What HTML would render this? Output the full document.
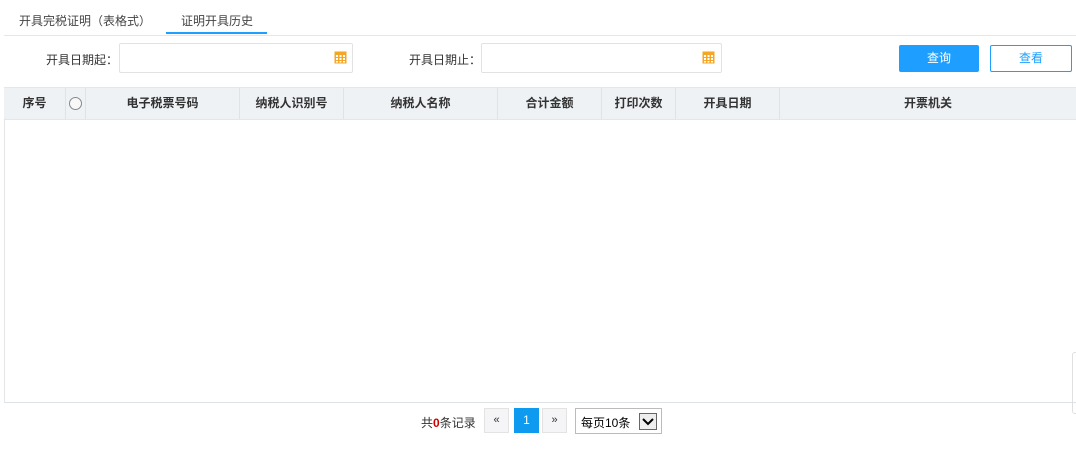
<!DOCTYPE html>
<html><head><meta charset="utf-8"><style>
body{margin:0;width:1076px;height:464px;background:#fff;font-family:"Liberation Sans","Noto Sans CJK SC",sans-serif;font-size:12px;color:#333;position:relative;overflow:hidden}
.a{position:absolute}
.inp{position:absolute;border:1px solid #e2e2e2;border-radius:2px;background:#fff}
.cal{position:absolute;width:12px;height:12px;background:#f5a623;border-radius:1px}
.cal:after{content:"";position:absolute;left:2px;top:4px;width:8px;height:6px;background:repeating-linear-gradient(90deg,#fff 0 2px,transparent 2px 3px),#fff;background:
linear-gradient(#fff,#fff) 0 0/8px 1px no-repeat;}
th{font-weight:bold}
.hd{position:absolute;top:87px;height:31px;background:#eef2f5;border-top:1px solid #e4e6e8;border-bottom:1px solid #e4e6e8;display:flex;left:4px;right:0}
.hd div{border-right:1px solid #e0e3e6;text-align:center;line-height:31px;font-weight:bold;font-size:12px;color:#333;box-sizing:border-box}
.pb{position:absolute;top:408px;height:25px;border:1px solid #e3e3e3;background:#f5f5f7;box-sizing:border-box;text-align:center;line-height:23px;font-size:11px}
</style></head><body>
<div class="a" style="left:19px;top:12px;font-size:12px;color:#444">开具完税证明（表格式）</div>
<div class="a" style="left:181px;top:12px;font-size:12px;color:#444">证明开具历史</div>
<div class="a" style="left:166px;top:32px;width:101px;height:2px;background:#1e9fff"></div>
<div class="a" style="left:4px;top:35px;right:0;height:1px;background:#e6e6e6"></div>

<div class="a" style="left:46px;top:51px">开具日期起：</div>
<div class="inp" style="left:119px;top:43px;width:232px;height:28px"></div>
<svg class="a" style="left:334px;top:51px" width="13" height="13"><rect x="0.5" y="0.5" width="12" height="12" fill="#f5a623"/><g fill="#fff"><rect x="2" y="4" width="2" height="2"/><rect x="5.5" y="4" width="2" height="2"/><rect x="9" y="4" width="2" height="2"/><rect x="2" y="7" width="2" height="2"/><rect x="5.5" y="7" width="2" height="2"/><rect x="9" y="7" width="2" height="2"/><rect x="2" y="10" width="2" height="1.5"/><rect x="5.5" y="10" width="2" height="1.5"/><rect x="9" y="10" width="2" height="1.5"/></g></svg>
<div class="a" style="left:409px;top:51px">开具日期止：</div>
<div class="inp" style="left:481px;top:43px;width:239px;height:28px"></div>
<svg class="a" style="left:702px;top:51px" width="13" height="13"><rect x="0.5" y="0.5" width="12" height="12" fill="#f5a623"/><g fill="#fff"><rect x="2" y="4" width="2" height="2"/><rect x="5.5" y="4" width="2" height="2"/><rect x="9" y="4" width="2" height="2"/><rect x="2" y="7" width="2" height="2"/><rect x="5.5" y="7" width="2" height="2"/><rect x="9" y="7" width="2" height="2"/><rect x="2" y="10" width="2" height="1.5"/><rect x="5.5" y="10" width="2" height="1.5"/><rect x="9" y="10" width="2" height="1.5"/></g></svg>

<div class="a" style="left:899px;top:45px;width:80px;height:27px;background:#1e9fff;border-radius:2px;color:#fff;text-align:center;line-height:27px">查询</div>
<div class="a" style="left:990px;top:45px;width:80px;height:25px;border:1px solid #1e9fff;border-radius:2px;color:#1e9fff;text-align:center;line-height:25px">查看</div>

<div class="hd">
<div style="width:62px">序号</div>
<div style="width:20px;position:relative"><span style="position:absolute;left:3px;top:9px;width:11px;height:11px;border:1px solid #888;border-radius:50%;background:#f8f8f8"></span></div>
<div style="width:154px">电子税票号码</div>
<div style="width:104px">纳税人识别号</div>
<div style="width:154px">纳税人名称</div>
<div style="width:104px">合计金额</div>
<div style="width:74px">打印次数</div>
<div style="width:104px">开具日期</div>
<div style="flex:1;border-right:none">开票机关</div>
</div>
<div class="a" style="left:4px;top:118px;width:1px;height:284px;background:#e4e6e8"></div>
<div class="a" style="left:4px;top:402px;right:0;height:1px;background:#e0e3e6"></div>
<div class="a" style="left:1072px;top:352px;width:6px;height:60px;border:1px solid #e0e0e0;border-radius:3px"></div>

<div class="a" style="left:421px;top:414px">共<b style="color:#c00">0</b>条记录</div>
<div class="pb" style="left:484px;width:25px">«</div>
<div class="pb" style="left:514px;width:25px;background:#0e9aef;border-color:#0e9aef;color:#fff;font-size:12px">1</div>
<div class="pb" style="left:542px;width:25px">»</div>
<div class="a" style="left:575px;top:408px;width:87px;height:26px;border:1px solid #bbb;box-sizing:border-box"></div>
<div class="a" style="left:581px;top:414px;color:#000">每页10条</div>
<div class="a" style="left:639px;top:413px;width:18px;height:17px;border:1px solid #666;box-sizing:border-box;background:#eee"><svg width="16" height="15"><path d="M3 5l5 5 5-5" stroke="#000" stroke-width="2" fill="none"/></svg></div>
</body></html>
